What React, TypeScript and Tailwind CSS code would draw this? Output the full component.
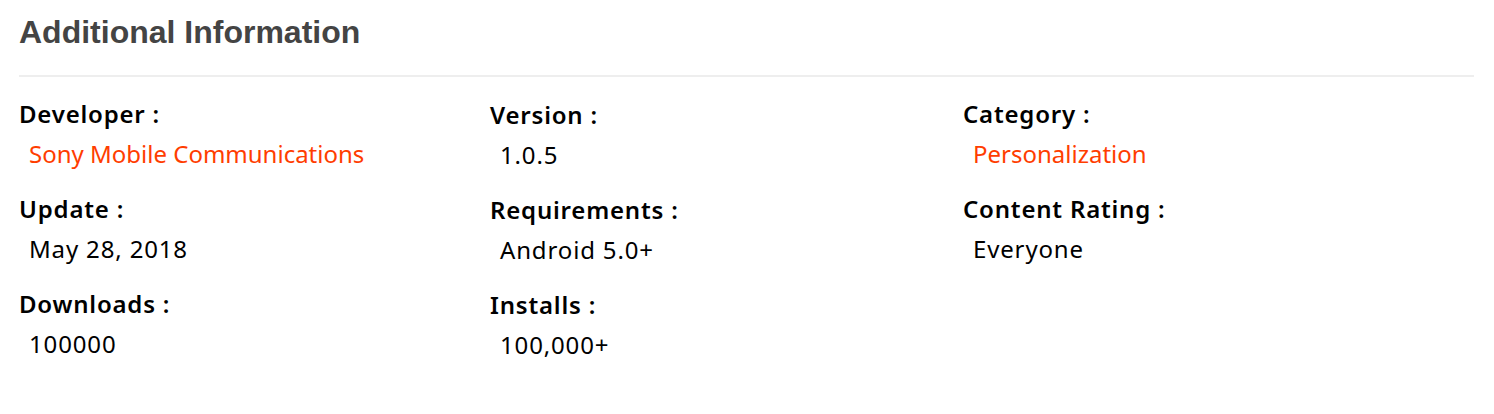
const columns = [
  [
    { label: "Developer :", value: "Sony Mobile Communications", link: true },
    { label: "Update :", value: "May 28, 2018" },
    { label: "Downloads :", value: "100000" },
  ],
  [
    { label: "Version :", value: "1.0.5" },
    { label: "Requirements :", value: "Android 5.0+" },
    { label: "Installs :", value: "100,000+" },
  ],
  [
    { label: "Category :", value: "Personalization", link: true },
    { label: "Content Rating :", value: "Everyone" },
  ],
];

export default function App() {
  return (
    <div className="w-full h-[414px] bg-white px-[19px] pt-[14px] font-['Noto_Sans',sans-serif]">
      <h2 className="font-['Liberation_Sans',Arial,sans-serif] font-bold text-[32px] leading-[36px] text-[#444]">
        Additional Information
      </h2>
      <div className="mt-[25px] h-[2px] w-[1455px] bg-[#eeeeee]" />
      <div className="grid grid-cols-[471px_473px_1fr] mt-[21px]">
        {columns.map((col, i) => (
          <div key={i} className={`flex flex-col gap-[23px] ${i === 1 ? "pt-[1px]" : ""}`}>
            {col.map((item) => (
              <div key={item.label}>
                <div className="text-[24px] leading-[32px] font-semibold tracking-[0.8px] text-black">
                  {item.label}
                </div>
                <div
                  className={`pl-[10px] mt-[8px] text-[24px] leading-[32px] ${
                    item.link ? "text-[#ff3d00]" : "text-black tracking-[0.85px]"
                  }`}
                >
                  {item.value}
                </div>
              </div>
            ))}
          </div>
        ))}
      </div>
    </div>
  );
}
